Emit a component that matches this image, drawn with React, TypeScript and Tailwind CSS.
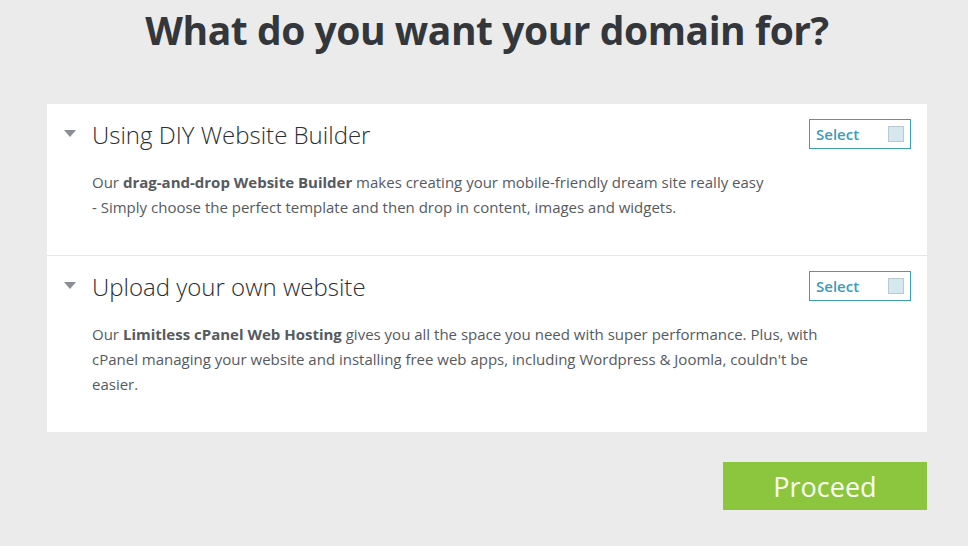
import React from 'react';

const font = { fontFamily: '"Open Sans", "Liberation Sans", sans-serif' };

function SelectBox() {
  return (
    <label className="flex items-center justify-between w-[102px] h-[30px] border border-[#3b9fb8] bg-white pl-[6px] pr-[6px] cursor-pointer">
      <span className="text-[15px] font-semibold text-[#3b9cb7]">Select</span>
      <span className="w-[16px] h-[16px] border border-[#b9c9d0] bg-[#d5e7ef]" />
    </label>
  );
}

function Option({ title, children, last }: { title: string; children: React.ReactNode; last?: boolean }) {
  return (
    <div className={`px-[16px] pt-[15px] pb-[35px] ${last ? '' : 'border-b border-[#e6e6e6]'}`}>
      <div className="flex items-center justify-between">
        <div className="flex items-center">
          <svg width="12" height="7" viewBox="0 0 12 7" className="ml-[1px] mr-[16px] mt-[-2px]">
            <path d="M0 0 L12 0 L6 7 Z" fill="#8a8d91" />
          </svg>
          <h2 className="text-[24px] font-light text-[#2a2e33] leading-[30px] pt-[1px] mb-[-1px]">{title}</h2>
        </div>
        <SelectBox />
      </div>
      <p className="mt-[21px] ml-[29px] w-[750px] text-[15px] leading-[25px] text-[#555a5f]">{children}</p>
    </div>
  );
}

export default function App() {
  return (
    <div className="min-h-[546px] bg-[#ebebeb] pt-[5px]" style={font}>
      <h1 className="text-center pl-[6px] text-[39px] font-bold text-[#33373b] leading-[50px] tracking-[-0.45px]">
        What do you want your domain for?
      </h1>
      <div className="w-[880px] ml-[47px] mt-[49px] bg-white">
        <Option title="Using DIY Website Builder">
          Our <b className="font-bold">drag-and-drop Website Builder</b> makes creating your mobile-friendly dream site really easy
          <br />- Simply choose the perfect template and then drop in content, images and widgets.
        </Option>
        <Option title="Upload your own website" last>
          Our <b className="font-bold">Limitless cPanel Web Hosting</b> gives you all the space you need with super performance. Plus, with cPanel managing your website and installing free web apps, including Wordpress &amp; Joomla, couldn't be easier.
        </Option>
      </div>
      <div className="flex justify-end w-[880px] ml-[47px] mt-[30px]">
        <button className="w-[204px] h-[48px] bg-[#8cc63e] text-[#fbfff0] text-[27px] leading-none">Proceed</button>
      </div>
    </div>
  );
}
